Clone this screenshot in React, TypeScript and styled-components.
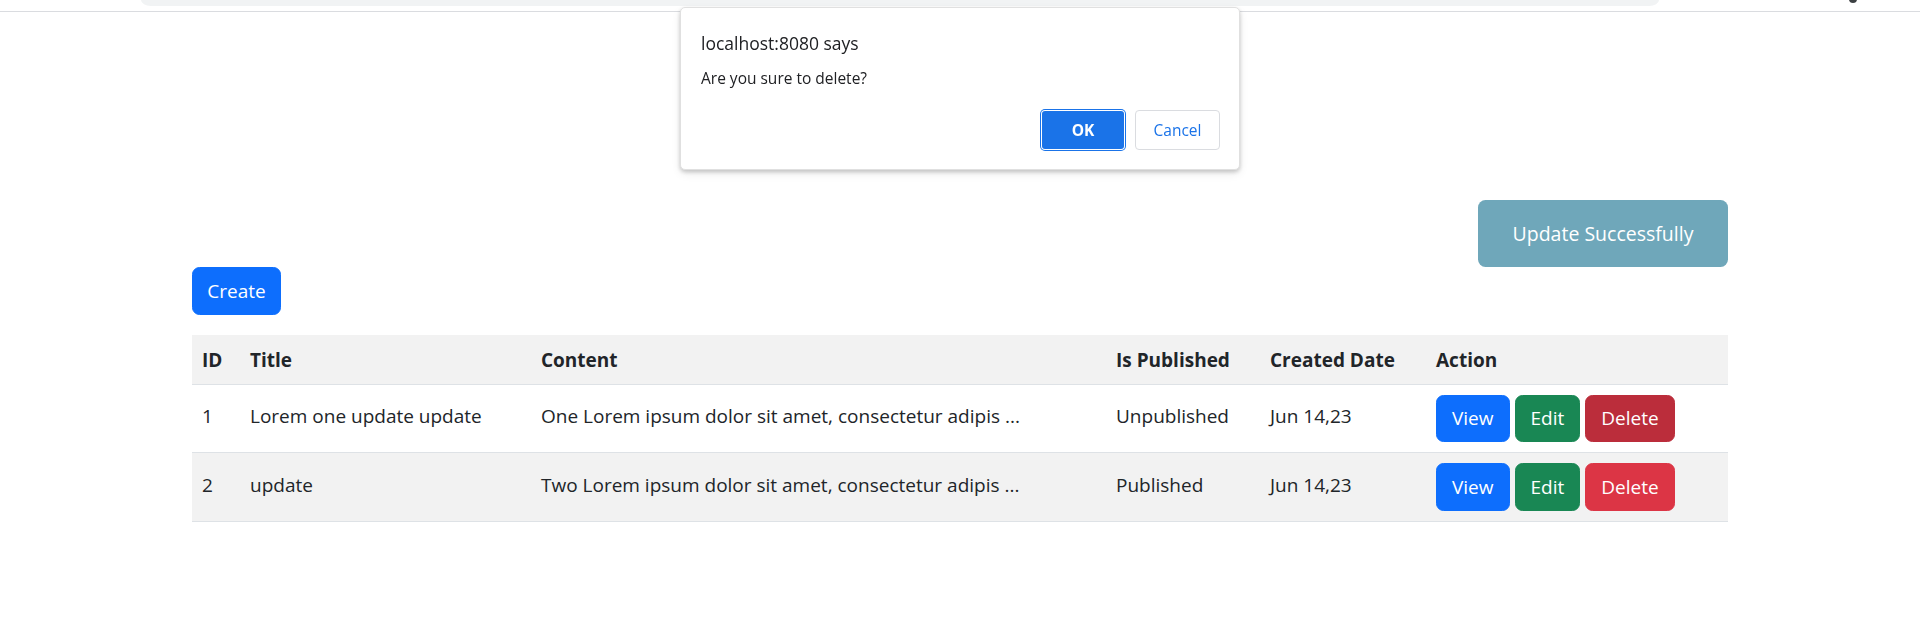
import React from "react";
import styled, { createGlobalStyle } from "styled-components";

const Global = createGlobalStyle`
  html, body { margin: 0; padding: 0; background: #fff; }
  body {
    font-family: "Open Sans", "Noto Sans", Arial, sans-serif;
    color: #212529;
    font-size: 19px;
    line-height: 30px;
  }
  * { box-sizing: border-box; }
`;

const Chrome = styled.div`
  position: relative;
  height: 12px;
  border-bottom: 1px solid #dadce0;
`;

const Omnibox = styled.div`
  margin-left: 141px;
  width: 1518px;
  height: 6px;
  background: #f1f3f4;
  border-radius: 0 0 10px 10px / 0 0 6px 6px;
`;

const ProfileDot = styled.div`
  position: absolute;
  left: 1849px;
  top: -5px;
  width: 8px;
  height: 8px;
  border-radius: 50%;
  background: #3c4043;
`;

const Page = styled.main`
  width: 1536px;
  margin: 0 auto;
  padding-top: 188px;
`;

const NoticeRow = styled.div`
  display: flex;
  justify-content: flex-end;
`;

const Notice = styled.div`
  width: 250px;
  height: 67px;
  display: flex;
  align-items: center;
  justify-content: center;
  background: #6fa7ba;
  color: #fff;
  border-radius: 7.5px;
  font-size: 19.5px;
`;

const Btn = styled.button<{ $bg: string }>`
  font-family: inherit;
  font-size: 19px;
  line-height: 30px;
  height: 47.5px;
  padding: 7.5px 15px;
  border: 1.25px solid ${(p) => p.$bg};
  background: ${(p) => p.$bg};
  color: #fff;
  border-radius: 7.5px;
  cursor: pointer;
  white-space: nowrap;
`;

const CreateBtn = styled(Btn)`
  display: block;
  width: 89px;
  padding: 7.5px 0;
`;

const Table = styled.table`
  width: 1536px;
  margin-top: 20px;
  border-collapse: collapse;
  table-layout: fixed;
`;

const Th = styled.th`
  text-align: left;
  font-weight: 700;
  padding: 10px 10px 9px;
  background: #f2f2f2;
  border-bottom: 1.25px solid #dee2e6;
  white-space: nowrap;
  vertical-align: middle;
`;

const Row = styled.tr<{ $striped: boolean }>`
  background: ${(p) => (p.$striped ? "#f2f2f2" : "#fff")};
`;

const Td = styled.td<{ $action?: boolean }>`
  padding: ${(p) => (p.$action ? "10px" : "8px 10px 12px")};
  border-bottom: 1.25px solid #dee2e6;
  white-space: nowrap;
  overflow: hidden;
  vertical-align: middle;
`;

const Actions = styled.div`
  display: flex;
  gap: 5px;
`;

const Dialog = styled.div`
  position: fixed;
  left: 680px;
  top: 7px;
  width: 560px;
  height: 163px;
  background: #fff;
  border-radius: 5px;
  border: 1px solid #e0e0e0;
  box-shadow: 0 2px 4px rgba(0, 0, 0, 0.2), 0 4px 10px rgba(0, 0, 0, 0.08);
  padding: 21px 19px 19px 20px;
  display: flex;
  flex-direction: column;
`;

const DialogTitle = styled.div`
  font-size: 17.5px;
  line-height: 28px;
  color: #202124;
`;

const DialogMsg = styled.div`
  margin-top: 11px;
  font-size: 15.5px;
  line-height: 20px;
  color: #202124;
`;

const DialogButtons = styled.div`
  margin-top: auto;
  display: flex;
  justify-content: flex-end;
  gap: 10px;
`;

const OkBtn = styled.button`
  width: 84px;
  height: 40px;
  background: #1a73e8;
  color: #fff;
  font-family: inherit;
  font-weight: 700;
  font-size: 15.5px;
  border: none;
  border-radius: 4px;
  box-shadow: 0 0 0 1px #1a73e8, inset 0 0 0 1px #fff;
`;

const CancelBtn = styled.button`
  width: 85px;
  height: 40px;
  background: #fff;
  color: #1a73e8;
  font-family: inherit;
  font-size: 15.5px;
  font-weight: 500;
  border: 1px solid #dadce0;
  border-radius: 4px;
`;

const rows = [
  {
    id: 1,
    title: "Lorem one update update",
    content: "One Lorem ipsum dolor sit amet, consectetur adipis ...",
    pub: "Unpublished",
    date: "Jun 14,23",
    del: "#bb2d3b",
  },
  {
    id: 2,
    title: "update",
    content: "Two Lorem ipsum dolor sit amet, consectetur adipis ...",
    pub: "Published",
    date: "Jun 14,23",
    del: "#dc3545",
  },
];

const widths = [48, 291, 575, 154, 166, 302];

export default function App() {
  return (
    <>
      <Global />
      <Chrome>
        <Omnibox />
        <ProfileDot />
      </Chrome>
      <Page>
        <NoticeRow>
          <Notice>Update Successfully</Notice>
        </NoticeRow>
        <CreateBtn $bg="#0d6efd">Create</CreateBtn>
        <Table>
          <colgroup>
            {widths.map((w, i) => (
              <col key={i} style={{ width: w }} />
            ))}
          </colgroup>
          <thead>
            <tr>
              <Th>ID</Th>
              <Th>Title</Th>
              <Th>Content</Th>
              <Th>Is Published</Th>
              <Th>Created Date</Th>
              <Th>Action</Th>
            </tr>
          </thead>
          <tbody>
            {rows.map((r, i) => (
              <Row key={r.id} $striped={i % 2 === 1}>
                <Td>{r.id}</Td>
                <Td>{r.title}</Td>
                <Td>{r.content}</Td>
                <Td>{r.pub}</Td>
                <Td>{r.date}</Td>
                <Td $action>
                  <Actions>
                    <Btn $bg="#0d6efd">View</Btn>
                    <Btn $bg="#198754">Edit</Btn>
                    <Btn $bg={r.del}>Delete</Btn>
                  </Actions>
                </Td>
              </Row>
            ))}
          </tbody>
        </Table>
      </Page>
      <Dialog>
        <DialogTitle>localhost:8080 says</DialogTitle>
        <DialogMsg>Are you sure to delete?</DialogMsg>
        <DialogButtons>
          <OkBtn>OK</OkBtn>
          <CancelBtn>Cancel</CancelBtn>
        </DialogButtons>
      </Dialog>
    </>
  );
}
